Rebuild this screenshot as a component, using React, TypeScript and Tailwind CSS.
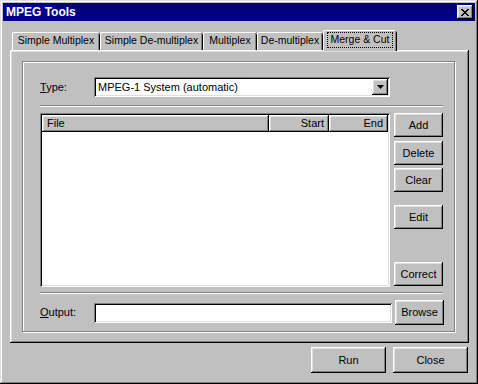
const raised =
  "shadow-[inset_-1px_-1px_#000,inset_1px_1px_#fff,inset_-2px_-2px_#808080,inset_2px_2px_#dfdfdf]";
const sunken =
  "shadow-[inset_1px_1px_#808080,inset_-1px_-1px_#fff,inset_2px_2px_#000,inset_-2px_-2px_#dfdfdf]";

function Button({ label, className = "" }: { label: string; className?: string }) {
  return (
    <div
      className={`flex items-center justify-center bg-[#c0c0c0] text-[11px] text-black ${raised} ${className}`}
    >
      {label}
    </div>
  );
}

function Tab({ label, w }: { label: string; w: string }) {
  return (
    <div
      className={`flex h-[18px] items-center justify-center rounded-t-[2px] bg-[#c0c0c0] text-[10.5px] shadow-[inset_1px_0_#fff,inset_0_1px_#fff,inset_-1px_0_#000,inset_-2px_0_#808080] ${w}`}
    >
      {label}
    </div>
  );
}

function Etched({ className = "" }: { className?: string }) {
  return <div className={`h-[2px] border-t border-[#808080] bg-white ${className}`} />;
}

export default function App() {
  return (
    <div className="flex h-[384px] w-[478px] flex-col bg-[#c0c0c0] p-[3px] font-['Liberation_Sans',Arial,sans-serif] text-black shadow-[inset_-1px_-1px_#000,inset_1px_1px_#dfdfdf,inset_-2px_-2px_#808080,inset_2px_2px_#fff]">
      {/* title bar */}
      <div className="flex h-[18px] items-center bg-[#000080] pl-[3px] pr-[2px]">
        <span className="text-[12px] font-bold text-white">MPEG Tools</span>
        <div className={`ml-auto flex h-[14px] w-[16px] items-center justify-center bg-[#c0c0c0] ${raised}`}>
          <svg width="8" height="7" viewBox="0 0 8 7">
            <path d="M0 0h2v1h1v1h2V1h1V0h2v1H7v1H6v1H5v1h1v1h1v1h1v1H6V6H5V5H3v1H2v1H0V6h1V5h1V4h1V3H2V2H1V1H0z" fill="#000" />
          </svg>
        </div>
      </div>

      {/* tabs */}
      <div className="ml-[9px] mt-[9px] flex h-[20px] items-end">
        <Tab label="Simple Multiplex" w="w-[88px]" />
        <Tab label="Simple De-multiplex" w="w-[103px]" />
        <Tab label="Multiplex" w="w-[54px]" />
        <Tab label="De-multiplex" w="w-[66px]" />
        <div className="relative z-10 -mb-px flex h-[21px] w-[74px] items-center justify-center rounded-t-[2px] bg-[#c0c0c0] pb-[2px] text-[10.5px] shadow-[inset_1px_0_#fff,inset_0_1px_#fff,inset_-1px_0_#000,inset_-2px_0_#808080]">
          <span className="flex h-[16px] w-[66px] items-center justify-center border border-dotted border-black">
            Merge &amp; Cut
          </span>
        </div>
      </div>

      {/* tab panel */}
      <div className={`ml-[7px] h-[293px] w-[459px] bg-[#c0c0c0] pl-[12px] pt-[11px] ${raised}`}>
        <div className="flex h-[271px] w-[433px] flex-col border border-[#808080] pl-[17px] pt-[15px] shadow-[inset_1px_1px_#fff,1px_1px_#fff]">
          {/* type row */}
          <div className="flex h-[20px] items-center text-[11px]">
            <span className="w-[54px]">
              <span className="underline">T</span>ype:
            </span>
            <div className={`flex h-[20px] w-[296px] items-center bg-white p-[2px] ${sunken}`}>
              <span className="flex-1 pl-[2px]">MPEG-1 System (automatic)</span>
              <div className={`flex h-[16px] w-[16px] items-center justify-center bg-[#c0c0c0] ${raised}`}>
                <svg width="7" height="4" viewBox="0 0 7 4">
                  <path d="M0 0h7L3.5 4z" fill="#000" />
                </svg>
              </div>
            </div>
          </div>

          <Etched className="mt-[8px] w-[403px]" />

          {/* list + buttons */}
          <div className="mt-[6px] flex">
            <div className={`flex h-[174px] w-[350px] flex-col bg-white p-[2px] ${sunken}`}>
              <div className="flex h-[17px] text-[11px]">
                <div className={`flex w-[227px] items-center bg-[#c0c0c0] pl-[5px] ${raised}`}>File</div>
                <div className={`flex w-[60px] items-center justify-end bg-[#c0c0c0] pr-[5px] ${raised}`}>Start</div>
                <div className={`flex w-[59px] items-center justify-end bg-[#c0c0c0] pr-[5px] ${raised}`}>End</div>
              </div>
            </div>
            <div className="ml-[4px] flex w-[49px] flex-col">
              <Button label="Add" className="h-[24px]" />
              <Button label="Delete" className="mt-[4px] h-[24px]" />
              <Button label="Clear" className="mt-[3px] h-[24px]" />
              <Button label="Edit" className="mt-[13px] h-[24px]" />
              <Button label="Correct" className="mt-[33px] h-[24px]" />
            </div>
          </div>

          <Etched className="mt-[5px] w-[403px]" />

          {/* output row */}
          <div className="mt-[6px] flex h-[25px] items-center text-[11px]">
            <span className="w-[54px]">
              <span className="underline">O</span>utput:
            </span>
            <div className={`h-[20px] w-[298px] bg-white ${sunken}`} />
            <Button label="Browse" className="ml-[3px] h-[25px] w-[49px]" />
          </div>
        </div>
      </div>

      {/* bottom buttons */}
      <div className="mt-[4px] flex justify-end gap-[7px] pr-[7px]">
        <Button label="Run" className="h-[26px] w-[75px]" />
        <Button label="Close" className="h-[26px] w-[75px]" />
      </div>
    </div>
  );
}
